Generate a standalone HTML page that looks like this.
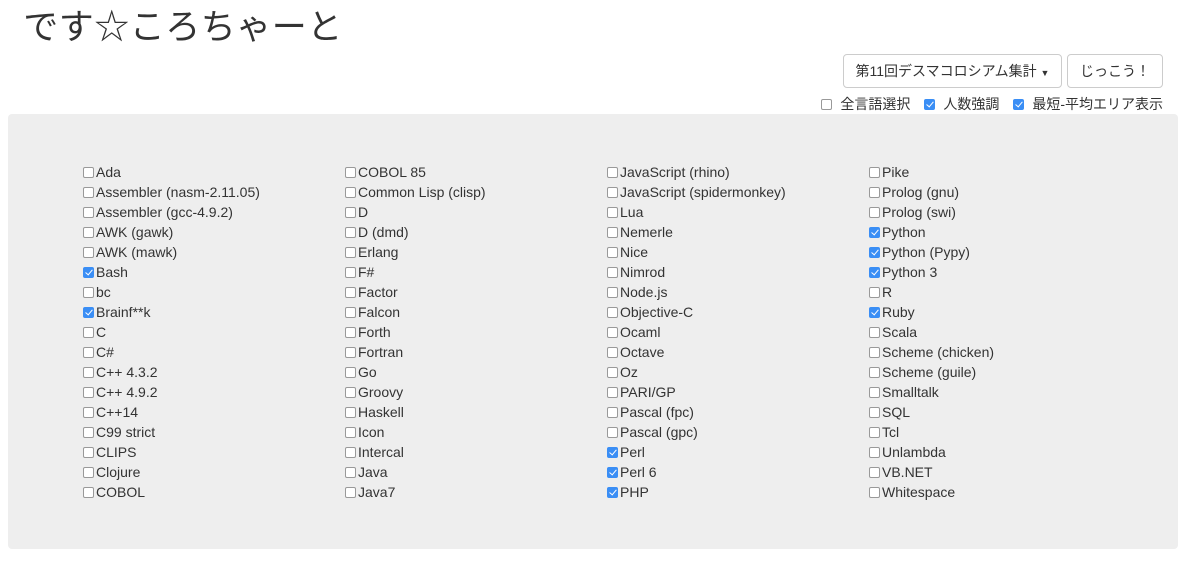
<!DOCTYPE html>
<html><head><meta charset="utf-8"><style>
body{margin:0;width:1187px;height:566px;background:#fff;font-family:"Liberation Sans","Noto Sans CJK JP",sans-serif;color:#333;position:relative;overflow:hidden}
h1{position:absolute;left:23px;top:2px;margin:0;font-weight:400;font-size:35px;line-height:46px;font-family:"Noto Sans CJK JP",sans-serif;white-space:nowrap}
h1 span{display:inline-block;width:35.5px;text-align:center;overflow:visible}
.btn{position:absolute;top:54px;height:34px;border:1px solid #ccc;border-radius:4px;box-sizing:border-box;font-size:14px;line-height:32px;text-align:center;background:#fff;font-family:"Liberation Sans","Noto Sans CJK JP",sans-serif}
.opts{position:absolute;top:95px;right:24px;font-size:14px;line-height:18px;display:flex;gap:14px}
.opts span{display:flex;align-items:center}
.cb{display:inline-block;width:11px;height:11px;border:1px solid #999;border-radius:2px;box-sizing:border-box;background:#fff;margin-right:2px;vertical-align:middle}
.ck{border:none;background:#3a8ef5;position:relative}
.ck:after{content:"";position:absolute;left:3.5px;top:1.5px;width:3px;height:6px;border:solid #fff;border-width:0 1.5px 1.5px 0;transform:rotate(40deg)}
.panel{position:absolute;left:8px;top:114px;width:1170px;height:435px;background:#eee;border-radius:4px}
.col{position:absolute;top:162px;font-size:14px;line-height:20px}
.col div{display:flex;align-items:center;height:20px;white-space:nowrap}
.opts .cb{margin-right:8px}
</style></head><body>
<h1><span>で</span><span>す</span><span>☆</span><span>こ</span><span>ろ</span><span>ち</span><span>ゃ</span><span>ー</span><span>と</span></h1>
<div class="btn" style="left:843px;width:219px">第11回デスマコロシアム集計 <span style="font-size:9px">▼</span></div>
<div class="btn" style="left:1067px;width:96px">じっこう！</div>
<div class="opts"><span><i class="cb"></i>全言語選択</span><span><i class="cb ck"></i>人数強調</span><span><i class="cb ck"></i>最短-平均エリア表示</span></div>
<div class="panel"></div>
<div class="col" style="left:83px">
<div><i class="cb"></i>Ada</div><div><i class="cb"></i>Assembler (nasm-2.11.05)</div><div><i class="cb"></i>Assembler (gcc-4.9.2)</div><div><i class="cb"></i>AWK (gawk)</div><div><i class="cb"></i>AWK (mawk)</div><div><i class="cb ck"></i>Bash</div><div><i class="cb"></i>bc</div><div><i class="cb ck"></i>Brainf**k</div><div><i class="cb"></i>C</div><div><i class="cb"></i>C#</div><div><i class="cb"></i>C++ 4.3.2</div><div><i class="cb"></i>C++ 4.9.2</div><div><i class="cb"></i>C++14</div><div><i class="cb"></i>C99 strict</div><div><i class="cb"></i>CLIPS</div><div><i class="cb"></i>Clojure</div><div><i class="cb"></i>COBOL</div>
</div>
<div class="col" style="left:345px">
<div><i class="cb"></i>COBOL 85</div><div><i class="cb"></i>Common Lisp (clisp)</div><div><i class="cb"></i>D</div><div><i class="cb"></i>D (dmd)</div><div><i class="cb"></i>Erlang</div><div><i class="cb"></i>F#</div><div><i class="cb"></i>Factor</div><div><i class="cb"></i>Falcon</div><div><i class="cb"></i>Forth</div><div><i class="cb"></i>Fortran</div><div><i class="cb"></i>Go</div><div><i class="cb"></i>Groovy</div><div><i class="cb"></i>Haskell</div><div><i class="cb"></i>Icon</div><div><i class="cb"></i>Intercal</div><div><i class="cb"></i>Java</div><div><i class="cb"></i>Java7</div>
</div>
<div class="col" style="left:607px">
<div><i class="cb"></i>JavaScript (rhino)</div><div><i class="cb"></i>JavaScript (spidermonkey)</div><div><i class="cb"></i>Lua</div><div><i class="cb"></i>Nemerle</div><div><i class="cb"></i>Nice</div><div><i class="cb"></i>Nimrod</div><div><i class="cb"></i>Node.js</div><div><i class="cb"></i>Objective-C</div><div><i class="cb"></i>Ocaml</div><div><i class="cb"></i>Octave</div><div><i class="cb"></i>Oz</div><div><i class="cb"></i>PARI/GP</div><div><i class="cb"></i>Pascal (fpc)</div><div><i class="cb"></i>Pascal (gpc)</div><div><i class="cb ck"></i>Perl</div><div><i class="cb ck"></i>Perl 6</div><div><i class="cb ck"></i>PHP</div>
</div>
<div class="col" style="left:869px">
<div><i class="cb"></i>Pike</div><div><i class="cb"></i>Prolog (gnu)</div><div><i class="cb"></i>Prolog (swi)</div><div><i class="cb ck"></i>Python</div><div><i class="cb ck"></i>Python (Pypy)</div><div><i class="cb ck"></i>Python 3</div><div><i class="cb"></i>R</div><div><i class="cb ck"></i>Ruby</div><div><i class="cb"></i>Scala</div><div><i class="cb"></i>Scheme (chicken)</div><div><i class="cb"></i>Scheme (guile)</div><div><i class="cb"></i>Smalltalk</div><div><i class="cb"></i>SQL</div><div><i class="cb"></i>Tcl</div><div><i class="cb"></i>Unlambda</div><div><i class="cb"></i>VB.NET</div><div><i class="cb"></i>Whitespace</div>
</div>
</body></html>
